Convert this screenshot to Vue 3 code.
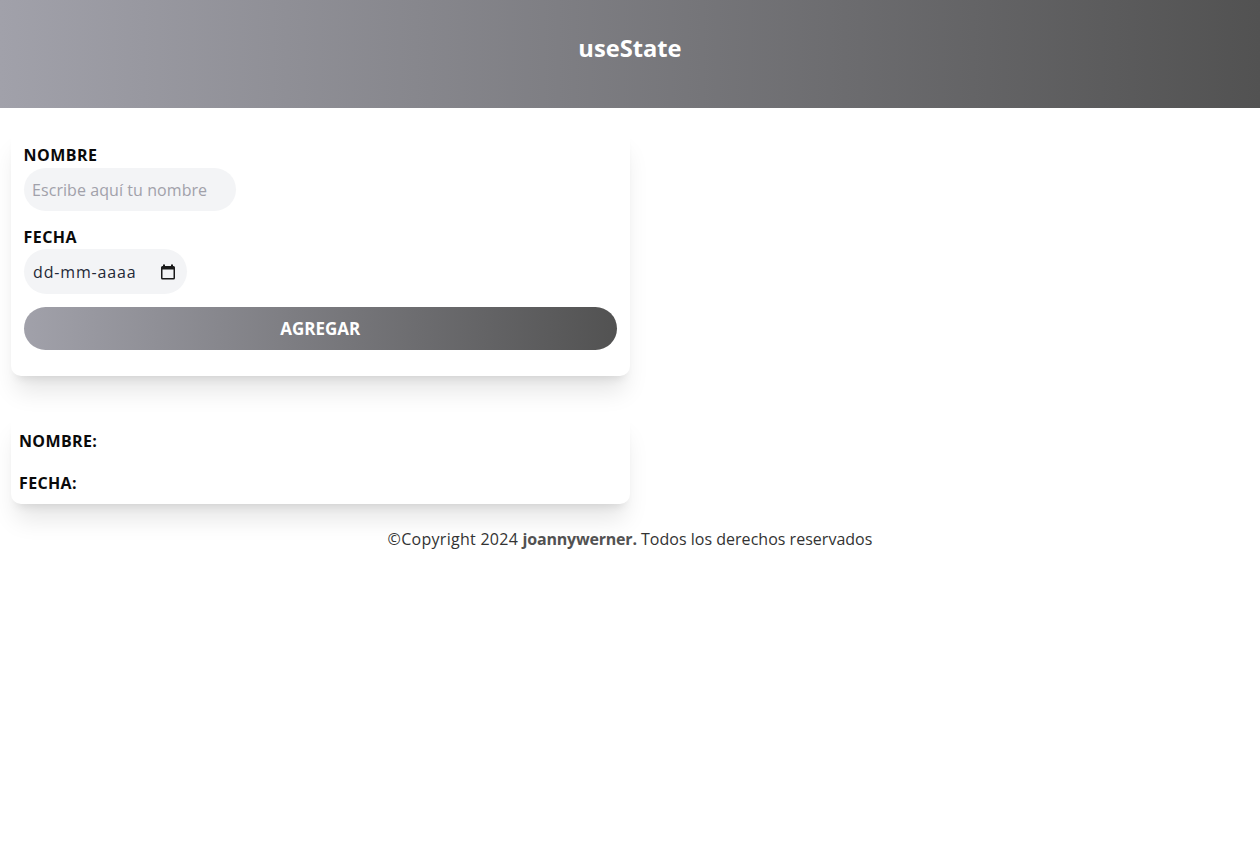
<script setup>
</script>

<template>
  <div class="page">
    <header class="top">
      <h1 class="title">useState</h1>
    </header>
    <main class="col">
      <form class="card form" @submit.prevent>
        <label class="lab" for="n">NOMBRE</label>
        <input id="n" class="inp name" type="text" placeholder="Escribe aquí tu nombre" />
        <label class="lab second">FECHA</label>
        <div class="inp date">
          <span class="dtext">dd-mm-aaaa</span>
          <svg class="cal" viewBox="0 0 16 16" width="16" height="16" aria-hidden="true">
            <path fill="#1a1a1a" d="M3 .5h2V2h6V.5h2V2h.5A1.5 1.5 0 0 1 15 3.500v10.500a1.500 1.500 0 0 1-1.500 1.500h-11A1.500 1.500 0 0 1 1 14V3.500A1.500 1.500 0 0 1 2.500 2H3V.5zm-.5 5v8.500h11V5.500h-11z"/>
          </svg>
        </div>
        <button class="btn" type="submit">AGREGAR</button>
      </form>
      <section class="card out">
        <p class="line">NOMBRE:</p>
        <p class="line l2">FECHA:</p>
      </section>
      <footer class="foot"><span class="f1">©Copyright 2024 </span><b>joannywerner.</b> Todos los derechos reservados</footer>
    </main>
  </div>
</template>

<style>
html, body { margin: 0; background: #fff; }
</style>

<style scoped>
.page {
  font-family: "Open Sans", "Noto Sans", sans-serif;
  color: #0a0a0a;
}
.top {
  height: 108px;
  display: flex;
  align-items: center;
  justify-content: center;
  background: linear-gradient(to right, #a1a1aa, #525252);
}
.title {
  margin: 0;
  color: #fff;
  font-size: 23.7px;
  font-weight: 700;
  line-height: 1;
  position: relative;
  top: -5px;
}
.col {
  display: flex;
  flex-direction: column;
}
.card {
  width: 619px;
  margin-left: 11px;
  box-sizing: border-box;
  background: #fff;
  border-radius: 10px;
  box-shadow: 0 20px 25px -5px rgba(0,0,0,.1), 0 8px 10px -6px rgba(0,0,0,.1);
}
.form {
  margin-top: 20px;
  height: 248px;
  padding: 15px 13px 0 12.500px;
  display: flex;
  flex-direction: column;
  align-items: flex-start;
}
.lab {
  font-size: 16px;
  font-weight: 700;
  line-height: 24px;
  letter-spacing: 0.45px;
}
.second { margin-top: 14px; }
.inp {
  box-sizing: border-box;
  background: #f3f4f6;
  border: 0;
  font-family: inherit;
  outline: none;
}
.name {
  width: 212px;
  height: 43px;
  margin-top: 1px;
  padding: 0 8.500px;
  border-radius: 22px;
  font-size: 16px;
  letter-spacing: 0.07px;
}
.name::placeholder { color: #a1a1aa; opacity: 1; }
.date {
  width: 163px;
  height: 45px;
  border-radius: 23px;
  padding: 0 10.500px 0 9.500px;
  display: flex;
  align-items: center;
  justify-content: space-between;
  font-size: 16px;
  color: #1f2937;
}
.dtext { letter-spacing: 0.85px; white-space: nowrap; }
.cal { flex: none; }
.btn {
  width: 100%;
  height: 43px;
  margin-top: 13px;
  border: 0;
  border-radius: 22px;
  color: #fff;
  font-family: inherit;
  font-size: 17px;
  font-weight: 700;
  background: linear-gradient(to right, #a1a1aa, #525252);
}
.out {
  margin-top: 36px;
  height: 92px;
  padding: 17px 8px 0;
}
.line {
  margin: 0;
  font-size: 16px;
  font-weight: 700;
  line-height: 24px;
  letter-spacing: 0.35px;
}
.l2 { margin-top: 18px; }
.foot {
  margin: 23px 0 0;
  text-align: center;
  font-size: 16px;
  line-height: 24px;
  color: #333;
  letter-spacing: 0.02px;
}
.f1 { letter-spacing: 0.28px; }
.foot b { color: #525252; letter-spacing: -0.2px; }
</style>
